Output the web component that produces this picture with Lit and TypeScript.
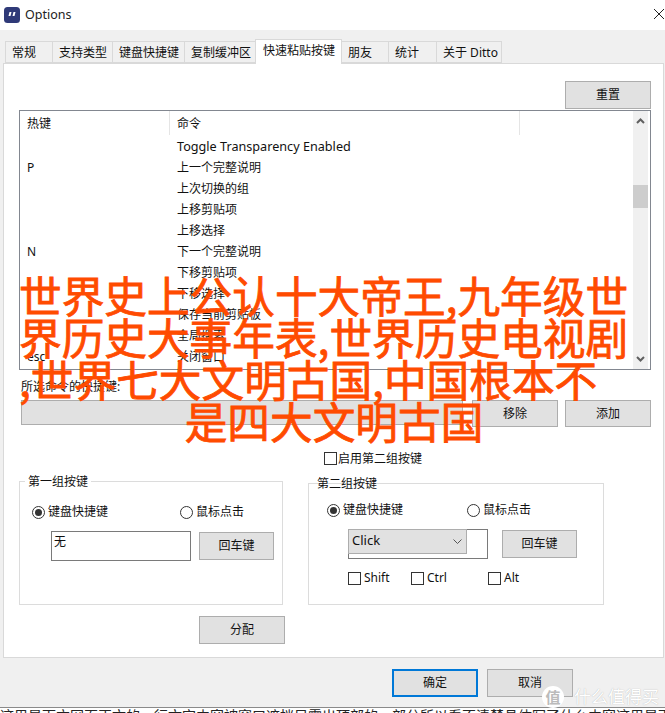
import { LitElement, html, css } from "lit";
import { customElement } from "lit/decorators.js";

const TABS: [string, number][] = [
  ["常规", 47], ["支持类型", 60], ["键盘快捷键", 72], ["复制缓冲区", 71],
  ["快速粘贴按键", 87], ["朋友", 46], ["统计", 48], ["关于 Ditto", 66],
];
const ROWS: [string, string][] = [
  ["", "Toggle Transparency Enabled"], ["P", "上一个完整说明"], ["", "上次切换的组"],
  ["", "上移剪贴项"], ["", "上移选择"], ["N", "下一个完整说明"], ["", "下移剪贴项"],
  ["", "下移选择"], ["", "保存当前剪贴板"], ["", "全局搜索"], ["esc", "关闭窗口"],
];

@customElement("app-root")
export class AppRoot extends LitElement {
  static styles = css`
    :host { display: block; width: 665px; height: 713px; overflow: hidden; position: relative; background: #fff;
      font: 12px/16px "Noto Sans", "Noto Sans CJK SC", sans-serif; color: #111; }
    * { box-sizing: border-box; }
    .title { height: 30px; display: flex; align-items: center; background: #fff; padding: 0 1px 0 4px; }
    .logo { width: 16px; height: 16px; margin-right: 5px; margin-top: -1px; }
    .title-text { font-size: 12.5px; flex: 1; color: #222; margin-top: 0; }
    .close { width: 10px; height: 10px; margin-top: -2px; }
    .body { height: 677px; background: #f0f0f0; padding-top: 9px; display: flex; flex-direction: column; }
    .tabs { display: flex; height: 24px; margin-left: 5px; align-items: flex-end; }
    .tab { height: 22px; border: 1px solid #d9d9d9; border-right-width: 0; padding-left: 6px; line-height: 21px; background: #f0f0f0; white-space: nowrap; }
    .tab.last { border-right-width: 1px; }
    .tab.active { height: 25px; background: #fff; border-right-width: 1px; border-bottom: 0; margin-bottom: -1px; position: relative; z-index: 1; line-height: 22px; padding-left: 7px; }
    .tab.active + .tab { border-left: 0; }
    .panel { margin-left: 3px; width: 661px; height: 595px; background: #fff; border: 1px solid #d9d9d9; border-right-width: 1px; padding: 17px 12px 0 15px; display: flex; flex-direction: column; }
    .btn { background: #e1e1e1; border: 1px solid #adadad; width: 86px; height: 28px; display: flex; align-items: center; justify-content: center; flex: none; }
    .btn.small { width: 75px; }
    .btn.primary { border: 2px solid #0078d7; }
    .reset { align-self: flex-end; }
    .list { margin-top: 1px; height: 260px; width: 632px; border: 1px solid #828790; display: flex; flex: none; }
    .list-main { flex: 1; display: flex; flex-direction: column; }
    .head { height: 25px; display: grid; grid-template-columns: 150px 350px; }
    .head div { padding-left: 7px; line-height: 26px; border-right: 1px solid #e5e5e5; height: 24px; }
    .row { height: 21px; display: grid; grid-template-columns: 151px 1fr; line-height: 21px; }
    .row span:first-child { padding-left: 7px; }
    .row span:last-child { padding-left: 6px; }
    .row.latin span:last-child { font-size: 12.65px; }
    .scroll { width: 15px; margin: 0 2px 0 0; background: #f0f0f0; display: flex; flex-direction: column; align-items: center; justify-content: space-between; position: relative; }
    .scroll svg { width: 9px; height: 6px; margin: 7px 0; }
    .thumb { position: absolute; top: 74px; left: 0; width: 15px; height: 23px; background: #cdcdcd; }
    .under { display: flex; align-items: flex-end; height: 57px; }
    .under-left { margin-left: 2px; width: 442px; }
    .under-label { line-height: 16px; margin-bottom: 5px; }
    .field { height: 25px; background: #e1e1e1; border: 1px solid #adadad; margin-bottom: 2px; }
    .under .btn + .btn { margin-left: 7px; }
    .under .btn.first { margin-left: 9px; height: 27px; }
    .under .btn { height: 27px; }
    .enable { display: flex; align-items: center; gap: 1px; margin: 25px 0 0 305px; height: 13px; }
    .check { width: 13px; height: 13px; border: 1px solid #333; background: #fff; flex: none; }
    .groups { display: flex; align-items: flex-end; gap: 25px; margin-top: 16px; height: 124px; }
    .group { border: 1px solid #dcdcdc; flex: none; }
    .g1 { width: 264px; height: 124px; }
    .g2 { width: 296px; height: 122px; }
    .legend { width: fit-content; background: #fff; padding: 0 3px; margin: -9px 0 0 5px; line-height: 18px; height: 18px; }
    .g2 .legend { margin-left: 5px; background: transparent; }
    .radios { display: flex; align-items: center; height: 13px; }
    .g1 .radios { margin: 15px 0 0 12px; }
    .g2 .radios { margin: 11px 0 0 18px; }
    .radio-wrap { display: flex; align-items: center; gap: 3px; }
    .radio-wrap span:last-child { margin-top: -1px; }
    .g1 .radio-wrap:first-child { width: 148px; }
    .g2 .radio-wrap:first-child { width: 140px; }
    .radio { width: 13px; height: 13px; border: 1px solid #333; border-radius: 50%; display: flex; align-items: center; justify-content: center; background: #fff; flex: none; }
    .radio i { width: 7px; height: 7px; border-radius: 50%; background: #333; }
    .inputs { display: flex; margin-top: 12px; }
    .g1 .inputs { margin-left: 31px; }
    .g2 .inputs { margin-left: 39px; }
    .input { width: 140px; height: 30px; border: 1px solid #7a7a7a; background: #fff; flex: none; padding: 2px 0 0 2px; line-height: 16px; }
    .g2 .input { padding: 0; }
    .inputs .btn { height: 28px; margin: 1px 0 0 8px; }
    .g2 .inputs .btn { margin-left: 14px; }
    .select { margin: -1px 0 0 -1px; width: 119px; height: 25px; background: #e1e1e1; border: 1px solid #adadad; display: flex; align-items: center; justify-content: space-between; padding: 0 4px 4px 3px; font-size: 13px; }
    .select svg { width: 9px; height: 5px; margin-top: 3px; }
    .mods { display: flex; margin: 13px 0 0 39px; height: 13px; }
    .mod { display: flex; align-items: center; gap: 3px; }
    .mod span:last-child { margin-top: -2px; }
    .mod.a { width: 63px; }
    .mod.b { width: 77px; }
    .assign { margin: 11px 0 0 180px; }
    .foot { display: flex; margin: 11px 0 0 392px; gap: 9px; }
    .strip { height: 6px; border-top: 1px solid #8a8a8a; background: #fff; overflow: hidden; white-space: nowrap; font-size: 14px; line-height: 18px; color: #222; }
    .strip span { display: block; margin-top: -1px; }
    .wm { position: absolute; left: 542px; top: 686px; display: flex; align-items: center; gap: 10px; }
    .wm-circle { width: 22px; height: 22px; border-radius: 50%; background: #fff; color: #bbb; display: flex; align-items: center; justify-content: center; font-size: 15px; font-weight: 700; }
    .wm-text { font-size: 17px; line-height: 22px; color: #fff; text-shadow: 0 0 1px #aaa; white-space: nowrap; }
    .overlay { position: absolute; left: 0; top: 274px; width: 665px; font: 400 42.67px/42px "Noto Sans CJK SC", sans-serif; color: #ff4b00; -webkit-text-stroke: 0.8px #ff4b00; white-space: nowrap; pointer-events: none; }
    .line { padding-left: 19px; }
    .line.center { padding-left: 3px; text-align: center; }
  `;

  render() {
    return html`
      <div class="title">
        <svg class="logo" viewBox="0 0 16 16">
          <rect width="16" height="16" rx="3.5" fill="#2f3a78"/>
          <path d="M5.5 5h2l-1 4h-2zM9.5 5h2l-1 4h-2z" fill="#fff"/>
        </svg>
        <span class="title-text">Options</span>
        <svg class="close" viewBox="0 0 10 10"><path d="M0 0L10 10M10 0L0 10" stroke="#222" stroke-width="1" fill="none"/></svg>
      </div>
      <div class="body">
        <div class="tabs">
          ${TABS.map(([t, w], i) => html`<div class="tab ${i === 4 ? "active" : ""} ${i === 7 ? "last" : ""}" style="width:${w}px">${t}</div>`)}
        </div>
        <div class="panel">
          <div class="btn reset">重置</div>
          <div class="list">
            <div class="list-main">
              <div class="head"><div>热键</div><div>命令</div></div>
              ${ROWS.map(([k, c], i) => html`<div class="row ${i === 0 ? "latin" : ""}"><span>${k}</span><span>${c}</span></div>`)}
            </div>
            <div class="scroll">
              <svg viewBox="0 0 9 6"><path d="M1 5L4.500 1.500L8 5" stroke="#606060" stroke-width="2" fill="none"/></svg>
              <div class="thumb"></div>
              <svg viewBox="0 0 9 6"><path d="M1 1L4.500 4.500L8 1" stroke="#606060" stroke-width="2" fill="none"/></svg>
            </div>
          </div>
          <div class="under">
            <div class="under-left">
              <div class="under-label">所选命令的快捷键:</div>
              <div class="field"></div>
            </div>
            <div class="btn first">移除</div>
            <div class="btn">添加</div>
          </div>
          <div class="enable"><span class="check"></span><span>启用第二组按键</span></div>
          <div class="groups">
            <div class="group g1">
              <div class="legend">第一组按键</div>
              <div class="radios">
                <div class="radio-wrap"><span class="radio"><i></i></span><span>键盘快捷键</span></div>
                <div class="radio-wrap"><span class="radio"></span><span>鼠标点击</span></div>
              </div>
              <div class="inputs"><div class="input">无</div><div class="btn small">回车键</div></div>
            </div>
            <div class="group g2">
              <div class="legend">第二组按键</div>
              <div class="radios">
                <div class="radio-wrap"><span class="radio"><i></i></span><span>键盘快捷键</span></div>
                <div class="radio-wrap"><span class="radio"></span><span>鼠标点击</span></div>
              </div>
              <div class="inputs">
                <div class="input"><div class="select"><span>Click</span><svg viewBox="0 0 9 5"><path d="M0.500 0.500L4.500 4.500L8.500 0.500" stroke="#555" fill="none"/></svg></div></div>
                <div class="btn small">回车键</div>
              </div>
              <div class="mods">
                <div class="mod a"><span class="check"></span><span>Shift</span></div>
                <div class="mod b"><span class="check"></span><span>Ctrl</span></div>
                <div class="mod"><span class="check"></span><span>Alt</span></div>
              </div>
            </div>
          </div>
          <div class="btn assign">分配</div>
        </div>
        <div class="foot"><div class="btn primary">确定</div><div class="btn">取消</div></div>
      </div>
      <div class="strip"><span>这里是下方网页正文的一行文字内容被窗口遮挡只露出顶部的一部分所以看不清楚具体写了什么内容这里是下方网页</span></div>
      <div class="wm"><span class="wm-circle">值</span><span class="wm-text">什么值得买</span></div>
      <div class="overlay">
        <div class="line">世界史上公认十大帝王,九年级世</div>
        <div class="line">界历史大事年表,世界历史电视剧</div>
        <div class="line">,世界七大文明古国,中国根本不</div>
        <div class="line center">是四大文明古国</div>
      </div>
    `;
  }
}
